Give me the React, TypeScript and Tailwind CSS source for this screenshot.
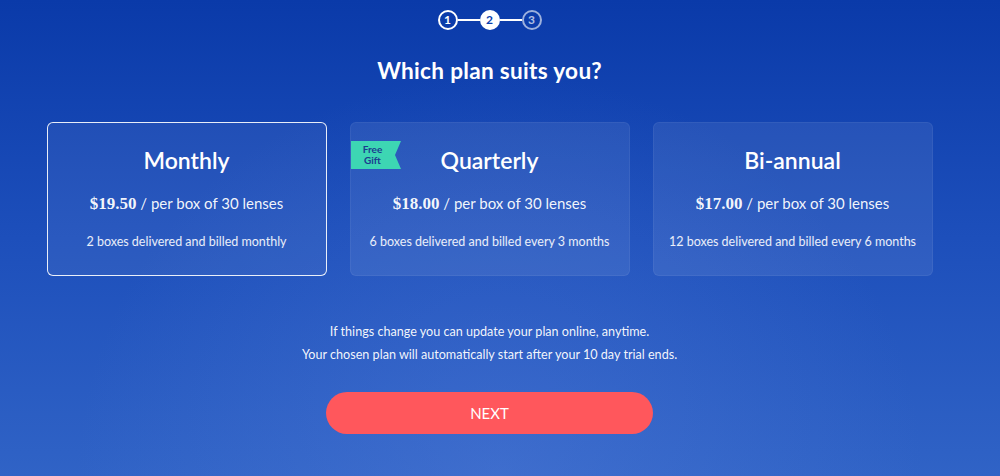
import React from "react";

const plans = [
  { name: "Monthly", price: "$19.50", desc: "2 boxes delivered and billed monthly", selected: true, gift: false },
  { name: "Quarterly", price: "$18.00", desc: "6 boxes delivered and billed every 3 months", selected: false, gift: true },
  { name: "Bi-annual", price: "$17.00", desc: "12 boxes delivered and billed every 6 months", selected: false, gift: false },
];

function Step({ n, state }: { n: number; state: "done" | "active" | "todo" }) {
  const cls =
    state === "active"
      ? "bg-white text-[#0b3fae] border-white"
      : state === "done"
      ? "border-white text-white"
      : "border-white/60 text-white/70";
  return (
    <div className={`w-[20px] h-[20px] rounded-full border-2 flex items-center justify-center text-[12px] font-bold leading-none ${cls}`}>
      {n}
    </div>
  );
}

export default function App() {
  return (
    <div
      className="w-[1000px] h-[476px] overflow-hidden text-white bg-[linear-gradient(180deg,#0a3aa9_0%,#1d4fbb_50%,#3063c6_100%)] relative"
      style={{ fontFamily: "Lato, 'Noto Sans', sans-serif" }}
    >
      <div className="absolute inset-0 bg-[radial-gradient(ellipse_at_50%_100%,rgba(90,130,220,0.35),transparent_60%)] pointer-events-none" />
      <div className="relative flex flex-col items-center w-[979px]">
        <div className="flex items-center mt-[10px]">
          <Step n={1} state="done" />
          <div className="w-[22px] h-[2px] bg-white" />
          <Step n={2} state="active" />
          <div className="w-[22px] h-[2px] bg-white" />
          <Step n={3} state="todo" />
        </div>
        <h1 className="mt-[26px] text-[22.6px] font-bold leading-[30px] tracking-[0.3px]">Which plan suits you?</h1>
        <div className="mt-[36px] flex gap-[23px]">
          {plans.map((p) => (
            <div
              key={p.name}
              className={`relative w-[280px] h-[154px] rounded-[6px] flex flex-col items-center ${
                p.selected ? "border border-white/90 bg-white/[0.06]" : "border border-white/[0.06] bg-white/[0.08]"
              }`}
            >
              {p.gift && (
                <div className="absolute left-0 top-[18px] w-[50px] h-[28px]">
                  <svg width="50" height="28" viewBox="0 0 50 28" className="absolute inset-0">
                    <polygon points="0,0 50,0 44,14 50,28 0,28" fill="#3dd6b3" />
                  </svg>
                  <div className="relative w-[44px] h-full flex flex-col items-center justify-center text-[10px] font-bold leading-[11px] text-[#1b3b8f]">
                    <span>Free</span>
                    <span>Gift</span>
                  </div>
                </div>
              )}
              <div className="mt-[22px] text-[23px] font-semibold leading-[30px]">{p.name}</div>
              <div className="mt-[18px] text-[15px] leading-[20px] text-white/95">
                <span className="font-bold text-[17px]" style={{ fontFamily: "'Liberation Serif', serif" }}>{p.price}</span>
                <span> / per box of 30 lenses</span>
              </div>
              <div className="mt-[20px] text-[12.5px] leading-[16px] text-white/90">{p.desc}</div>
            </div>
          ))}
        </div>
        <div className="mt-[44px] text-[12.6px] leading-[23px] text-white/95 text-center">
          <p>If things change you can update your plan online, anytime.</p>
          <p>Your chosen plan will automatically start after your 10 day trial ends.</p>
        </div>
        <button className="mt-[26px] w-[327px] h-[42px] rounded-full bg-[#ff575c] text-white text-[15px] leading-none">
          NEXT
        </button>
      </div>
    </div>
  );
}
